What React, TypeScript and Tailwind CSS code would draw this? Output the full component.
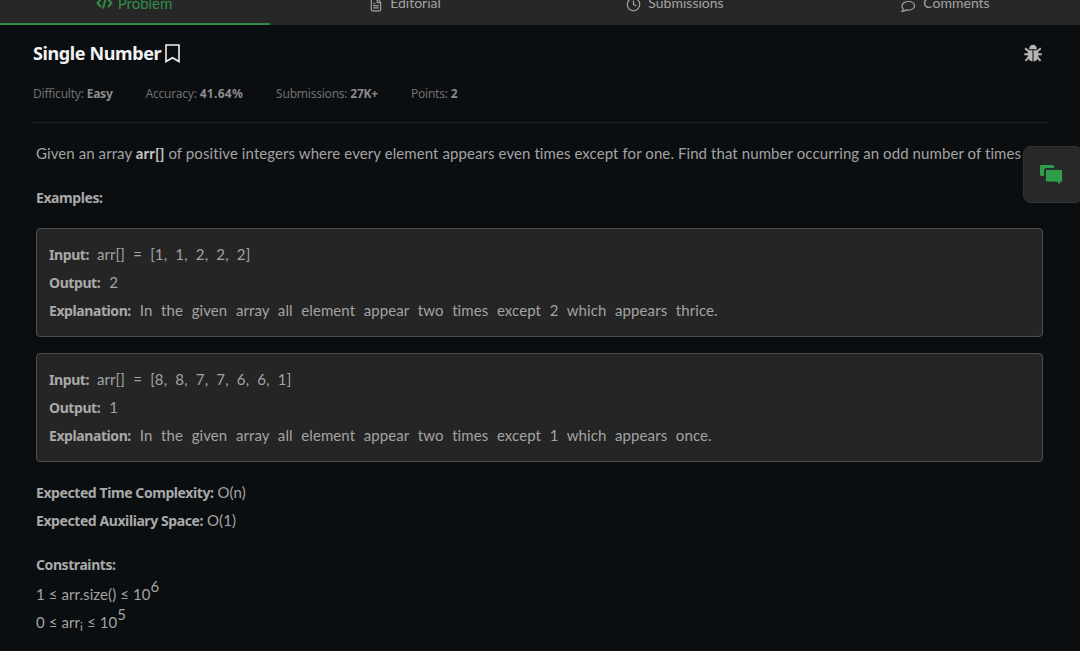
import { Clock, FileText } from "lucide-react";
import type { ReactNode } from "react";

const body = "font-['Lato','Noto_Sans',sans-serif] tracking-[0.085px]";
const heavy = "font-['Noto_Sans',sans-serif] text-[14px] font-bold text-[#a9a9a9] tracking-[-0.42px] [word-spacing:0px]";

function CodeIcon() {
  return (
    <svg width="17" height="12" viewBox="0 0 17 12" fill="none" stroke="#2f8d46" strokeWidth="2">
      <path d="M5 2 1.500 6 5 10" />
      <path d="M12 2 15.500 6 12 10" />
      <path d="M10 0.500 7 11.500" />
    </svg>
  );
}

function BookmarkIcon() {
  return (
    <svg width="15" height="19" viewBox="0 0 15 19" fill="none" stroke="#f2f2f2" strokeWidth="1.600">
      <path d="M1 1h13v16.500l-6.500-3.800L1 17.500Z" />
    </svg>
  );
}

function CommentIcon() {
  return (
    <svg width="16" height="14" viewBox="0 0 16 14" fill="none" stroke="currentColor" strokeWidth="1.200">
      <path d="M8.500 1.500c3.400 0 6 1.900 6 4.300s-2.600 4.300-6 4.300c-.8 0-1.500-.1-2.200-.3-1 .9-2.500 1.400-4.300 1.500.7-.8 1.100-1.600 1.200-2.500-.8-.8-1.200-1.900-1.200-3 0-2.400 3.100-4.300 6.500-4.300Z" />
    </svg>
  );
}

function BugIcon() {
  return (
    <svg width="18" height="19" viewBox="0 0 18 19" fill="#b4b4b4">
      <path d="M5 5.300C5.300 2 7 .8 9 .8s3.700 1.200 4 4.500Z" />
      <path d="M3.800 6.300h4.700v11.200C5.800 17.300 3.800 15.300 3.800 12.500Z" />
      <path d="M9.500 6.300h4.700v6.200c0 2.800-2 4.800-4.700 5Z" />
      <path d="M0.300 9.200h3.900v2H0.300ZM13.800 9.200h3.900v2h-3.900Z" />
      <path d="m1.800 3.500 3.200 2.800-1.300 1.500-3.200-2.800ZM16.200 3.500 13 6.300l1.300 1.500 3.200-2.800Z" />
      <path d="m3.800 12.500 1.300 1.500-2.800 3.600-1.600-1.200ZM14.200 12.500 12.900 14l2.800 3.600 1.600-1.200Z" />
    </svg>
  );
}

function ChatIcon() {
  return (
    <svg width="24" height="22" viewBox="0 0 24 22" fill="#2f9e4a">
      <path d="M1 1.500C1 .7 1.700 0 2.500 0h11C14.300 0 15 .7 15 1.500V3H7.500C6 3 5 4 5 5.500V11H2.500C1.700 11 1 10.300 1 9.500Z" />
      <path d="M8 4.500h14c.8 0 1.500.7 1.500 1.500v9.500c0 .8-.7 1.500-1.500 1.500h-.5l-.3 3-3.200-3H8c-.8 0-1.500-.7-1.500-1.500V6C6.500 5.200 7.200 4.500 8 4.500Z" stroke="#282828" strokeWidth="0.800" />
    </svg>
  );
}

function Tab({ icon, label, active, iconClass }: { icon: ReactNode; label: string; active?: boolean; iconClass: string }) {
  return (
    <div
      className={
        active
          ? "flex h-[25px] w-[270px] items-end justify-center gap-[5px] border-b-2 border-[#2f8d46] pb-[10px] pr-[2px] font-['Lato',sans-serif] text-[15px] leading-[20px] text-[#2f8d46]"
          : "flex h-[25px] w-[270px] items-end justify-center gap-[7px] pb-[12px] font-['Lato',sans-serif] text-[14px] leading-[20px] text-[#a3a3a3]"
      }
    >
      <span className={`flex ${iconClass}`}>{icon}</span>
      <span>{label}</span>
    </div>
  );
}

function Meta({ label, value, wide }: { label: string; value: string; wide?: boolean }) {
  return (
    <span className="font-['Noto_Sans',sans-serif] text-[12px] leading-[16px] tracking-[-0.22px] text-[#6f6f6f]">
      {label} <b className={wide ? "font-bold tracking-[0.3px] text-[#8b8b8b]" : "font-bold text-[#8b8b8b]"}>{value}</b>
    </span>
  );
}

function Example({ input, output, text }: { input: string; output: string; text: string }) {
  const row = `flex h-[28px] items-center gap-[9px] ${body} text-[15px] text-[#a3a3a3]`;
  return (
    <div className="h-[109px] w-[1007px] rounded-[4px] border border-[#4f4f4f] bg-[#252525] px-[12px] pb-[12px] pt-[11px]">
      <div className={row}>
        <b className={`${heavy} -mr-[1px]`}>Input:</b>
        <span className="[word-spacing:4.300px]">{input}</span>
      </div>
      <div className={row}>
        <b className={heavy}>Output:</b>
        <span>{output}</span>
      </div>
      <div className={row}>
        <b className={heavy}>Explanation:</b>
        <span className="[word-spacing:4.700px]">{text}</span>
      </div>
    </div>
  );
}

function Line({ children }: { children: ReactNode }) {
  return <div className={`flex h-[28px] items-center gap-[4px] ${body} text-[15px] text-[#a3a3a3]`}>{children}</div>;
}

export default function App() {
  return (
    <div className="relative h-[651px] w-[1080px] overflow-hidden bg-[#0b0e10]">
      <div className="flex h-[25px] bg-[#272727]">
        <Tab active icon={<CodeIcon />} iconClass="mb-[4px]" label="Problem" />
        <Tab icon={<FileText size={14} />} iconClass="mb-[1px]" label="Editorial" />
        <Tab icon={<Clock size={15} />} iconClass="mb-[1px]" label="Submissions" />
        <Tab icon={<CommentIcon />} iconClass="-mb-[1px]" label="Comments" />
      </div>

      <div className="px-[33px]">
        <div className="flex h-[56px] items-center justify-between pr-[5px]">
          <div className="flex items-center gap-[4px]">
            <h1 className="font-['Noto_Sans',sans-serif] text-[18px] font-bold tracking-[-0.38px] text-[#f2f2f2]">Single Number</h1>
            <BookmarkIcon />
          </div>
          <BugIcon />
        </div>
        <div className="flex h-[26px] items-center gap-[33px]">
          <Meta label="Difficulty:" value="Easy" />
          <Meta label="Accuracy:" value="41.64%" wide />
          <Meta label="Submissions:" value="27K+" />
          <Meta label="Points:" value="2" />
        </div>
        <div className="mt-[15px] h-px w-[1014px] bg-[#1e2224]" />
      </div>

      <div className="px-[36px]">
        <p className={`mt-[16px] h-[28px] whitespace-nowrap ${body} text-[15px] leading-[28px] text-[#a3a3a3]`}>
          Given an array <b className="font-bold text-[#c4c4c4]">arr[]</b> of positive integers where every element appears even times except for one. Find that number occurring an odd number of times
        </p>
        <div className={`mt-[17px] h-[28px] leading-[28px] ${heavy}`}>Examples:</div>
        <div className="mt-[16px] flex flex-col gap-[16px]">
          <Example input="arr[] = [1, 1, 2, 2, 2]" output="2" text="In the given array all element appear two times except 2 which appears thrice." />
          <Example input="arr[] = [8, 8, 7, 7, 6, 6, 1]" output="1" text="In the given array all element appear two times except 1 which appears once." />
        </div>
        <div className="mt-[16px]">
          <Line>
            <b className={heavy}>Expected Time Complexity:</b> O(n)
          </Line>
          <Line>
            <b className={heavy}>Expected Auxiliary Space:</b> O(1)
          </Line>
        </div>
        <div className={`mt-[17px] h-[28px] leading-[28px] ${heavy}`}>Constraints:</div>
        <div className={`mt-[1px] h-[28px] ${body} text-[15px] leading-[28px] text-[#a3a3a3]`}>
          1 ≤ arr.size() ≤ 10<sup className="top-[-8px] text-[15px]">6</sup>
        </div>
        <div className={`h-[28px] ${body} text-[15px] leading-[28px] text-[#a3a3a3]`}>
          0 ≤ arr<sub className="text-[12px]">i</sub> ≤ 10<sup className="top-[-8px] text-[15px]">5</sup>
        </div>
      </div>

      <div className="absolute left-[1023px] top-[146px] flex h-[57px] w-[60px] items-center rounded-[8px] border border-[#333] bg-[#282828] pb-[1px] pl-[15px] pt-[3px]">
        <ChatIcon />
      </div>
    </div>
  );
}
